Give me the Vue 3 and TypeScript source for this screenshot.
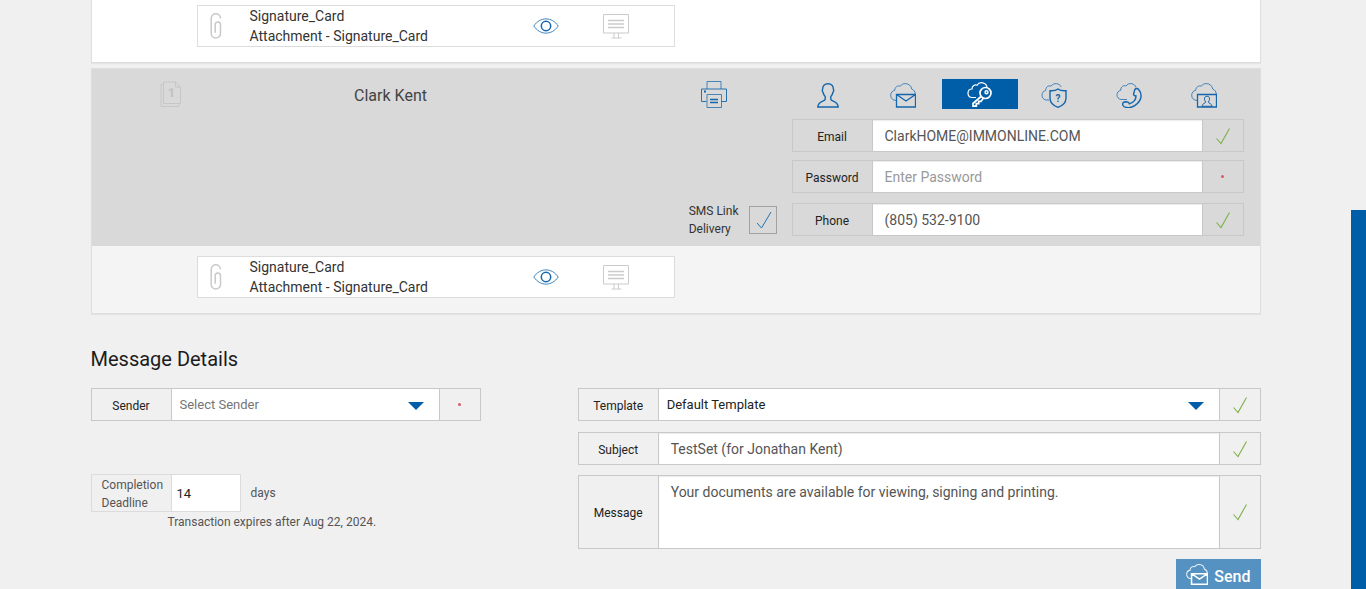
<script setup lang="ts">
import { ref } from 'vue'

const cloud =
  'M6 17.5C2.8 17.3.7 15.3.7 12.3.7 9.6 2.4 7.7 4.8 7.3 4.6 4.2 7.6 2.2 10.3 3.2 11.4 1.4 13.2.6 15.2.6 18.6.6 21.3 2.8 21.7 6 23.9 6.8 25.2 8.7 25.2 11'

const methods = ['In person', 'Email', 'Password', 'Question', 'Phone', 'Identity']
const activeMethod = ref(2)

const email = ref('ClarkHOME@IMMONLINE.COM')
const password = ref('')
const phone = ref('(805) 532-9100')
const smsLink = ref(true)
const sender = ref('')
const template = ref('default')
const subject = ref('TestSet (for Jonathan Kent)')
const message = ref('Your documents are available for viewing, signing and printing.')
const days = ref('14')

const attachments = [
  { id: 1, title: 'Signature_Card', detail: 'Attachment - Signature_Card' },
  { id: 2, title: 'Signature_Card', detail: 'Attachment - Signature_Card' },
]
</script>

<template>
  <div class="page">
    <main class="main">
      <div class="wrap">
        <section v-for="item in attachments" :key="item.id" class="card" :class="{ first: item.id === 1 }">
          <header v-if="item.id === 2" class="signer">
            <div class="order">
              <svg width="22" height="27" viewBox="0 0 22 27" fill="none" stroke="#c6c6c6">
                <path d="M3.500 3.500H1v22h18v-3M3.500 1h12l5 5v16.500h-17zM15.500 1v5h5" />
                <text x="8" y="16" font-size="12" font-weight="900" fill="#c2c2c2" stroke="none">1</text>
              </svg>
            </div>
            <h2 class="name">Clark Kent</h2>
            <div class="side">
              <button class="icon-btn print" type="button" aria-label="Print">
                <svg width="26" height="27" viewBox="0 0 26 27" fill="none" stroke="#1466ad">
                  <path d="M6 8V.5h14V8" stroke-opacity=".75" />
                  <path d="M5.500 20.500H.5V8h25v12.500h-5" stroke-opacity=".9" />
                  <path d="M6 13.500h14.500v13H6z" stroke-opacity=".75" />
                  <path d="M9 18.500h8M9 21.500h8" stroke-width="1.300" />
                  <path d="M3 10.500h2" stroke-width="2" />
                </svg>
              </button>
              <div class="sms">
                <label for="sms">SMS Link<br />Delivery</label>
                <span class="tick">
                  <input id="sms" v-model="smsLink" type="checkbox" />
                  <svg v-if="smsLink" width="16" height="18" viewBox="0 0 16 18" fill="none" stroke="#1f73b7">
                    <path d="M1 12l4.500 5L15 1" />
                  </svg>
                </span>
              </div>
            </div>
            <div class="contact">
              <div class="methods">
                <button
                  v-for="(m, i) in methods"
                  :key="m"
                  type="button"
                  class="method"
                  :class="{ active: i === activeMethod }"
                  :aria-label="m"
                  @click="activeMethod = i"
                >
                  <svg width="26" height="25" viewBox="0 0 26 25" fill="none" stroke="currentColor">
                    <path
                      v-if="i === 0"
                      d="M13 .7C9.500.7 7.500 2.800 7.700 6c-.7.600-.5 2.800.4 3.300.3 2 1.200 3.400 2.100 4.200v2.800c-.5 2.200-7.200 2-7.400 7.700h20.400c-.2-5.700-6.900-5.500-7.400-7.700v-2.800c.9-.8 1.800-2.200 2.100-4.200.9-.5 1.100-2.700.4-3.300.2-3.200-1.800-5.300-5.300-5.300z"
                      stroke-width="1.400"
                    />
                    <template v-else-if="i === 1">
                      <path :d="cloud" stroke-opacity=".75" />
                      <path d="M6.500 11.500h19v12.500h-19zl9.500 6.500 9.500-6.500" stroke-width="1.300" />
                    </template>
                    <template v-else-if="i === 2">
                      <path d="M9 15.500H4.500C-.5 14.500 0 7 5 7 5 3.500 8 2.500 10 3.200c2.500-4 9.500-3 10 2.300" stroke-width="1.200" />
                      <circle cx="18.500" cy="11" r="5.500" stroke-width="1.700" />
                      <circle cx="19.500" cy="10.200" r="1.500" stroke-width="1.400" />
                      <path d="M14 14.500L6 21.500v2.700h3.300v-2.500h2.400v-2.300h2.200l2.300-3" stroke-width="1.700" />
                    </template>
                    <template v-else-if="i === 3">
                      <path d="M8.500 17H5C-.7 16 .2 8 4.700 7.500 4.700 3.800 7.500 2.200 10 3.200c2.700-4 8.500-3 10.200.8" stroke-opacity=".75" />
                      <path d="M17 6c-2.500 1.800-5 2-8 1.700v7.800c.3 4.500 4 7.500 8 8.800 4-1.300 7.700-4.300 8-8.800V7.700C22 8 19.500 7.800 17 6z" stroke-width="1.400" />
                      <text x="17" y="19" text-anchor="middle" font-size="10" font-weight="700" fill="currentColor" stroke="none">?</text>
                    </template>
                    <template v-else-if="i === 4">
                      <path d="M11 16.500H5C-.7 15.500.2 8 4.700 7.300 4.700 3.500 7.500 2 10 3c2.700-4 9-2.800 10 1.500" stroke-opacity=".75" />
                      <path
                        d="M18.800 6.500c1.200-1.500 2.800-1.300 3.700-.2 5.500 6.500 1.500 14.500-6.700 17.700-3 1-7.500 1-8.800-1.500-.9-1.800.3-3.800 2-3.800l2.500.3c1 .1 1.500.8 1.800 1.800 4.200-1.300 6.700-4 6.700-7.800-1.800-.1-2.700-1-2.300-2.500z"
                        stroke-width="1.400"
                      />
                    </template>
                    <template v-else>
                      <path :d="cloud" stroke-opacity=".75" />
                      <path d="M6.500 11.500h19v12.500h-19z" stroke-width="1.300" />
                      <path d="M16 13.200c-2 0-2.700 1.400-2.500 3 .1 1.200.6 2.100 1.200 2.700-.2 1.600-3.500 1.400-3.700 4.400h10c-.2-3-3.500-2.800-3.700-4.400.6-.6 1.100-1.500 1.200-2.700.2-1.600-.5-3-2.500-3z" />
                    </template>
                  </svg>
                </button>
              </div>
              <div class="field">
                <label for="email">Email</label>
                <input id="email" v-model="email" type="email" />
                <span class="state"><svg class="ok" viewBox="0 0 16 18"><path d="M1.500 11.500l4.500 5L14.500 1.500" /></svg></span>
              </div>
              <div class="field">
                <label for="password">Password</label>
                <input id="password" v-model="password" type="password" placeholder="Enter Password" />
                <span class="state"><i class="dot"></i></span>
              </div>
              <div class="field phone">
                <label for="phone">Phone</label>
                <input id="phone" v-model="phone" type="tel" />
                <span class="state"><svg class="ok" viewBox="0 0 16 18"><path d="M1.500 11.500l4.500 5L14.500 1.500" /></svg></span>
              </div>
            </div>
          </header>
          <div class="body">
            <div class="doc">
              <svg class="clip" width="12" height="26" viewBox="0 0 12 26" fill="none" stroke="#c9c9c9" stroke-width="1.500">
                <path d="M10.500 5.500C10.500-.8 1.200-.8 1.200 5.500v14.700c0 6.300 9.300 6.300 9.300 0v-8.500c0-3.700-5.300-3.700-5.300 0v8" />
              </svg>
              <p class="doc-text">{{ item.title }}<br />{{ item.detail }}</p>
              <button class="icon-btn" type="button" aria-label="View">
                <svg width="26" height="16" viewBox="0 0 26 16" fill="none" stroke="#1466ad">
                  <path d="M.8 8C7-1.500 19-1.500 25.200 8 19 17.500 7 17.500.8 8z" stroke-opacity=".8" />
                  <circle cx="13" cy="8" r="4.700" stroke-width="1.500" />
                </svg>
              </button>
              <svg class="screen" width="26" height="25" viewBox="0 0 26 25" fill="none" stroke="#cbcbcb">
                <path d="M.5.5h25v18.500H.5zM11 19v5M15.500 19v5M8.500 24h10" />
                <path d="M5 6.500h16M5 10h16M5 13.500h16" stroke-width="1.300" />
              </svg>
            </div>
          </div>
        </section>

        <h1>Message Details</h1>
        <form class="details" @submit.prevent>
          <div class="left">
            <div class="field">
              <label for="sender">Sender</label>
              <span class="pick">
                <select id="sender" v-model="sender" class="empty">
                  <option value="">Select Sender</option>
                </select>
                <i class="caret"></i>
              </span>
              <span class="state"><i class="dot"></i></span>
            </div>
            <div class="deadline">
              <label for="days">Completion Deadline</label>
              <input id="days" v-model="days" type="text" />
              <span class="unit">days</span>
            </div>
            <p class="note">Transaction expires after Aug 22, 2024.</p>
          </div>
          <div class="right">
            <div class="field">
              <label for="template">Template</label>
              <span class="pick">
                <select id="template" v-model="template">
                  <option value="default">Default Template</option>
                </select>
                <i class="caret"></i>
              </span>
              <span class="state"><svg class="ok" viewBox="0 0 16 18"><path d="M1.500 11.500l4.500 5L14.500 1.500" /></svg></span>
            </div>
            <div class="field subject">
              <label for="subject">Subject</label>
              <input id="subject" v-model="subject" type="text" />
              <span class="state"><svg class="ok" viewBox="0 0 16 18"><path d="M1.500 11.500l4.500 5L14.500 1.500" /></svg></span>
            </div>
            <div class="field tall">
              <label for="message">Message</label>
              <textarea id="message" v-model="message"></textarea>
              <span class="state"><svg class="ok" viewBox="0 0 16 18"><path d="M1.500 11.500l4.500 5L14.500 1.500" /></svg></span>
            </div>
            <button class="send" type="submit">
              <svg width="22" height="21" viewBox="0 0 26 25" fill="none" stroke="#fff" stroke-width="1.300">
                <path :d="cloud" stroke-opacity=".85" />
                <path d="M6.500 11.500h19v12.500h-19zl9.500 6.500 9.500-6.500" stroke-width="1.800" />
              </svg>
              <span>Send</span>
            </button>
          </div>
        </form>
      </div>
    </main>
    <aside class="rail"></aside>
  </div>
</template>

<style>
body {
  margin: 0;
  background: #f0f0f0;
}
</style>

<style scoped>
* {
  box-sizing: border-box;
}
.page {
  display: flex;
  height: 100vh;
  overflow: hidden;
  background: #f0f0f0;
  font-family: Roboto, "Liberation Sans", sans-serif;
  color: #333;
}
.main {
  flex: 1;
  min-width: 0;
}
.wrap {
  max-width: 1170px;
  margin: 0 auto;
}
.rail {
  width: 15px;
  margin-top: 210px;
  background: #005da8;
}
button,
input,
select,
textarea {
  font-family: inherit;
}
.card {
  border: 1px solid #dedede;
  background: #f4f4f4;
  box-shadow: 0 1px 1px #e4e4e4;
}
.card.first {
  margin-bottom: 5px;
  border-top: 0;
  background: #fff;
}
.body {
  padding: 10px 105px 15px;
}
.first .body {
  padding-top: 5px;
}
.doc {
  display: grid;
  grid-template-columns: 52px 283px 70px 1fr;
  align-items: center;
  width: 478px;
  max-width: 100%;
  height: 42px;
  border: 1px solid #dcdcdc;
  background: #fff;
}
.clip {
  margin-left: 12px;
}
.doc-text {
  margin: 0;
  font-size: 14px;
  line-height: 20px;
}
.icon-btn {
  display: block;
  justify-self: start;
  padding: 0;
  border: 0;
  background: none;
}
.icon-btn svg,
.screen {
  display: block;
}
.signer {
  display: grid;
  grid-template-columns: 156px 286px 1fr 452px;
  padding: 10px 16px 10px 0;
  background: #d9d9d9;
}
.order {
  padding: 2px 68px;
}
.name {
  margin: 5px 0 0;
  font-size: 16px;
  font-weight: 400;
  line-height: 24px;
  text-align: center;
  color: #444;
}
.side {
  display: flex;
  flex-direction: column;
  justify-content: space-between;
  align-items: flex-end;
}
.print {
  margin: 2px 65px 0 0;
}
.sms {
  display: flex;
  align-items: center;
  gap: 10px;
  margin: 0 15px -2px 0;
  font-size: 12px;
  line-height: 18px;
}
.tick {
  position: relative;
  width: 28px;
  height: 28px;
}
.tick input {
  appearance: none;
  display: block;
  width: 28px;
  height: 28px;
  margin: 0;
  border: 1px solid #a3a3a3;
}
.tick svg {
  position: absolute;
  top: 5px;
  left: 7px;
  pointer-events: none;
}
.methods {
  display: grid;
  grid-template-columns: repeat(6, 1fr);
  margin-bottom: 10px;
}
.method {
  display: flex;
  justify-content: center;
  align-items: center;
  height: 30px;
  padding: 0 3px 0 0;
  border: 0;
  background: none;
  color: #1466ad;
}
.method svg {
  margin-top: 3px;
}
.method.active {
  padding: 0;
  background: #005da8;
  color: #fff;
}
.method.active svg {
  margin-top: 0;
}
.field {
  display: grid;
  grid-template-columns: 80px 1fr 41px;
  height: 33px;
  border: 1px solid #c8c8c8;
}
.contact .field {
  margin-bottom: 8px;
}
.contact .phone {
  margin: 10px 0 0;
}
.field label {
  display: flex;
  align-items: center;
  justify-content: center;
  padding-top: 2px;
  border-right: 1px solid #c8c8c8;
  font-size: 12px;
  color: #222;
}
.field > input,
.field > textarea {
  width: 100%;
  height: 100%;
  padding: 0 12px;
  border: 0;
  border-radius: 0;
  background: #fff;
  box-shadow: inset 0 1px 1px #ececec;
  font-size: 14px;
  color: #555;
  outline: 0;
}
.field > textarea {
  display: block;
  padding: 6px 12px;
  line-height: 20px;
  resize: none;
}
.field > input::placeholder {
  color: #999;
  opacity: 1;
}
.state {
  display: flex;
  align-items: center;
  justify-content: center;
  border-left: 1px solid #c8c8c8;
}
.ok {
  width: 16px;
  height: 18px;
  fill: none;
  stroke: #7fb04a;
  stroke-width: 1.1;
}
.dot {
  width: 3px;
  height: 3px;
  border-radius: 50%;
  background: #dc5a62;
}
h1 {
  margin: 31px 0 15px;
  font-size: 20px;
  font-weight: 400;
  line-height: 28px;
  color: #1c1c1c;
}
.details {
  display: grid;
  grid-template-columns: 4fr 7fr;
  column-gap: 97px;
}
.pick {
  position: relative;
  background: #fff;
}
.pick select {
  appearance: none;
  display: block;
  width: 100%;
  height: 100%;
  padding: 0 8px;
  border: 0;
  background: none;
  font-size: 13px;
  color: #222;
}
.pick select.empty {
  color: #757575;
}
.caret {
  position: absolute;
  top: 13px;
  right: 15px;
  border: 8px solid transparent;
  border-top-color: #005da8;
  border-bottom: 0;
  pointer-events: none;
}
.deadline {
  display: flex;
  align-items: center;
  margin-top: 53px;
  font-size: 12px;
  line-height: 18px;
  color: #555;
}
.deadline label {
  width: 80px;
  height: 38px;
  padding: 1px 0 0 10px;
  border: 1px solid #dcdcdc;
  border-right: 0;
}
.deadline input {
  width: 70px;
  height: 38px;
  padding: 0 5px;
  border: 1px solid #dcdcdc;
  border-radius: 0;
  background: #fff;
  font-size: 13px;
  color: #222;
}
.unit {
  margin-left: 10px;
}
.note {
  margin: 0 0 0 77px;
  font-size: 12px;
  line-height: 20px;
  color: #555;
}
.right {
  display: flex;
  flex-direction: column;
}
.right .field {
  margin-bottom: 10px;
}
.right .subject {
  margin-top: 1px;
}
.right .tall {
  height: 74px;
}
.send {
  display: flex;
  align-self: flex-end;
  align-items: center;
  gap: 6px;
  height: 34px;
  padding: 0 10px;
  border: 0;
  background: #5591c1;
  color: #fff;
  font-size: 16px;
  font-weight: 500;
}
.send svg {
  margin-bottom: 4px;
}
</style>
